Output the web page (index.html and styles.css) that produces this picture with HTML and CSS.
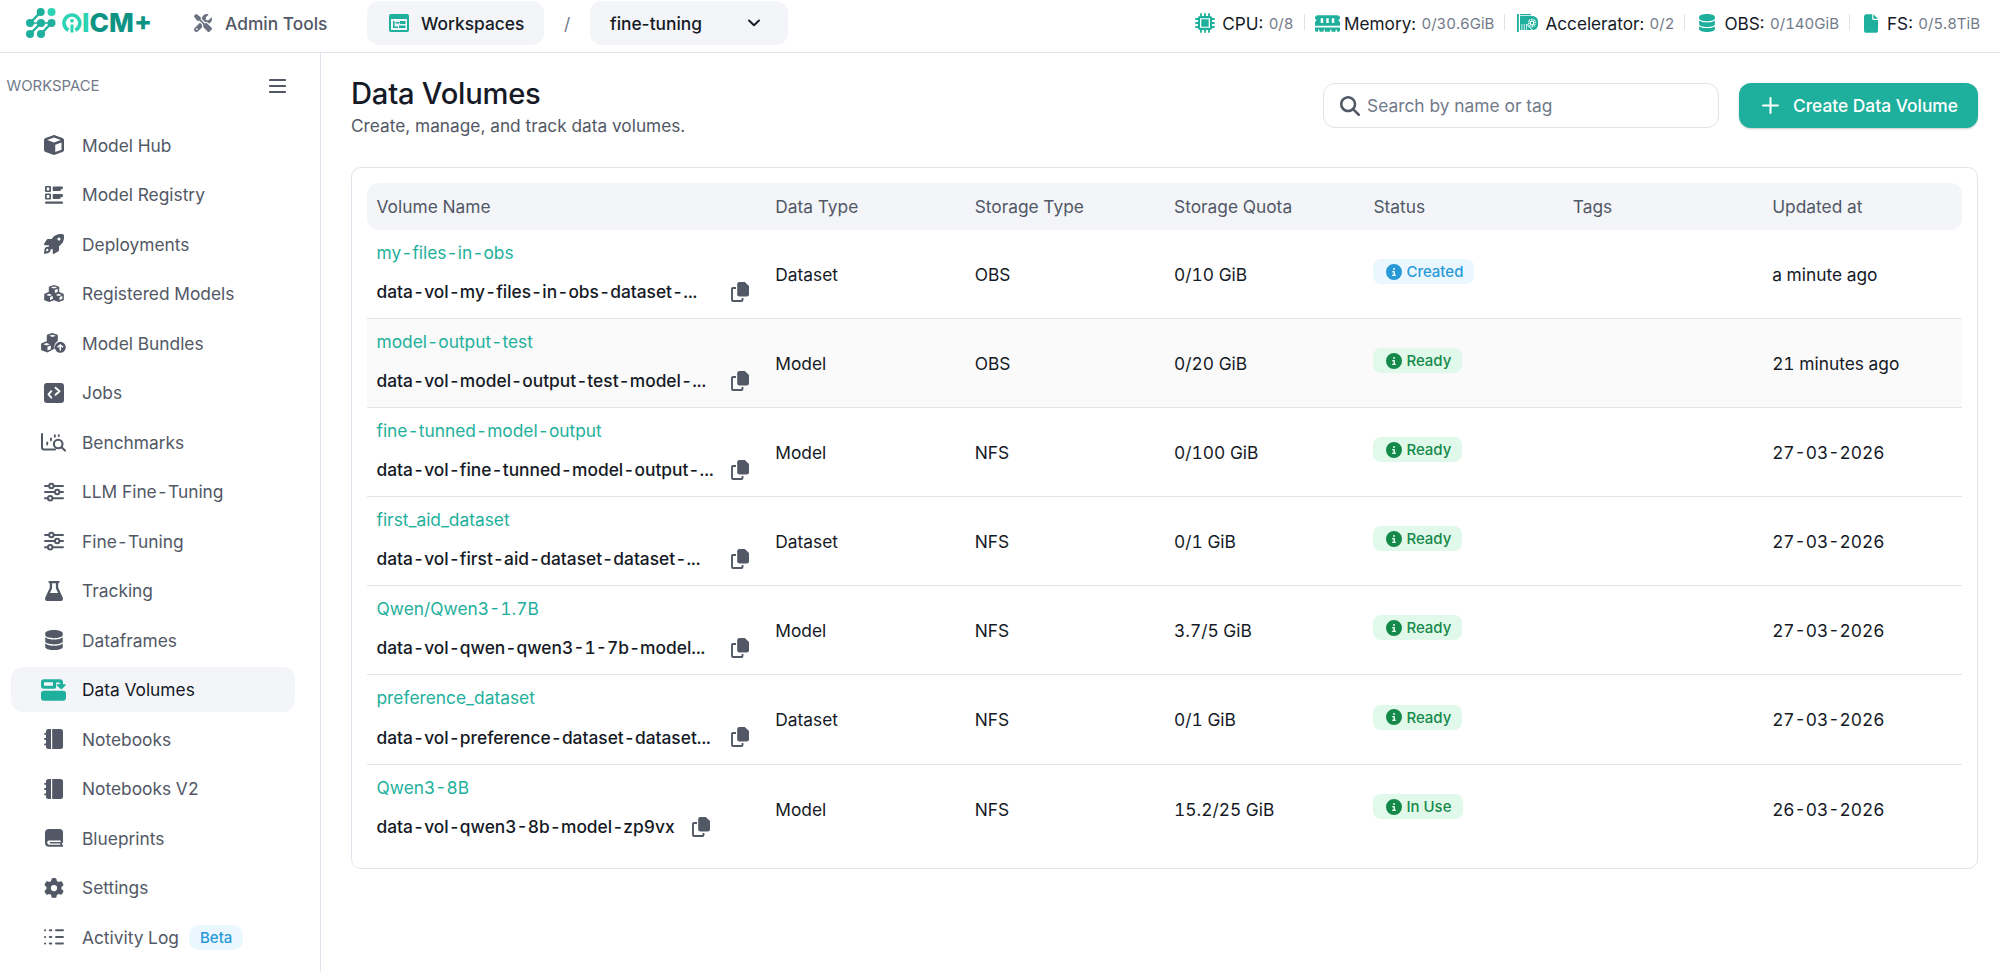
FILE: index.html
```
<!DOCTYPE html>
<html lang="en">
<head>
    <meta charset="UTF-8">
    <meta name="viewport" content="width=device-width, initial-scale=1.0">
    <title>QICM+ - Data Volumes</title>
    <link rel="stylesheet" href="styles.css">
</head>
<body>
    <!-- Icon set -->
    <svg class="sprite" xmlns="http://www.w3.org/2000/svg">
        <symbol id="tools" viewBox="0 0 512 512"><path d="M78.6 5C69.1-2.4 55.6-1.5 47 7L7 47c-8.5 8.5-9.4 22-2.1 31.6l80 104c4.5 5.9 11.6 9.4 19 9.4h54.1l109 109c-14.7 29-10 65.4 14.3 89.6l112 112c12.5 12.5 32.8 12.5 45.3 0l64-64c12.5-12.5 12.5-32.8 0-45.3l-112-112c-24.2-24.2-60.6-29-89.6-14.3l-109-109V104c0-7.5-3.5-14.5-9.4-19L78.6 5zM19.9 396.1C7.2 408.8 0 426.1 0 444.1C0 481.6 30.4 512 67.9 512c18 0 35.3-7.2 48-19.9L233.7 374.3c-7.8-20.9-9-43.6-3.6-65.1l-61.7-61.7L19.9 396.1zM512 144c0-10.5-1.1-20.7-3.2-30.5c-2.4-11.2-16.1-14.1-24.2-6l-63.9 63.9c-3 3-7.1 4.7-11.3 4.7H352c-8.8 0-16-7.2-16-16V102.6c0-4.2 1.7-8.3 4.7-11.3l63.9-63.9c8.1-8.1 5.2-21.8-6-24.2C388.7 1.1 378.5 0 368 0C288.5 0 224 64.5 224 144l0 .8 85.3 85.3c36-9.1 75.8 .5 104 28.7L429 274.5c49-23 83-72.8 83-130.5zM56 432a24 24 0 1 1 48 0 24 24 0 1 1 -48 0z"/></symbol>
        <symbol id="workspaces" viewBox="0 0 20 18"><path fill-rule="evenodd" d="M2 0h16a2 2 0 0 1 2 2v14a2 2 0 0 1-2 2H2a2 2 0 0 1-2-2V2a2 2 0 0 1 2-2zM2 5v11h16V5z"/><path d="M4 7h1.600v5.500H9V14H4zM6.500 8h4v1.500h-4zM11 7h5.500v3H11zM10 11.500h6.500v2.500H10z"/></symbol>
        <symbol id="chip" viewBox="0 0 20 20"><path fill-rule="evenodd" d="M5 3h10a2 2 0 0 1 2 2v10a2 2 0 0 1-2 2H5a2 2 0 0 1-2-2V5a2 2 0 0 1 2-2zm0 2.200v9.600h10V5.200z"/><path d="M6.300 6.300h7.400v7.400H6.300z"/><path fill="none" stroke="currentColor" stroke-width="1.800" stroke-linecap="round" d="M6 1v3M10 1v3M14 1v3M6 16v3M10 16v3M14 16v3M1 6h3M1 10h3M1 14h3M16 6h3M16 10h3M16 14h3"/></symbol>
        <symbol id="memory" viewBox="0 0 576 380"><path fill-rule="evenodd" d="M64 0C28.700 0 0 28.700 0 64v7c0 6.600 4.700 12.600 10.900 14.800C23.600 90.200 32 102.200 32 116s-8.400 25.800-21.100 30.200C4.700 148.400 0 154.400 0 161v79h576v-79c0-6.600-4.700-12.600-10.900-14.800C552.400 141.800 544 129.800 544 116s8.400-25.800 21.100-30.200c6.200-2.200 10.900-8.200 10.900-14.800v-7c0-35.300-28.700-64-64-64zM132 70h56v110h-56zm128 0h56v110h-56zm128 0h56v110h-56zM0 280v72c0 16 14 28 32 28h38v-36c0-20 32-20 32 0v36h95v-36c0-20 32-20 32 0v36h118v-36c0-20 32-20 32 0v36h95v-36c0-20 32-20 32 0v36h38c18 0 32-12 32-28v-72z"/></symbol>
        <symbol id="accelerator" viewBox="0 0 21 18"><path d="M0 0h1.800v18H0zM3 0h11v1.200H3zM3 2h12.500A5.500 5.500 0 0 1 21 8v2.500c0 3-2 5.500-5 5.500l-6-6H3z"/><path d="M3 9h1.500v7H3zM5.300 9h1.500v7H5.300zM7.600 9h1.500v7H7.600zM9.800 11l5 5h-5z"/><circle cx="15" cy="9" r="4.200" fill="#fff"/><circle cx="15" cy="9" r="3.100" fill="none" stroke="currentColor" stroke-width="1.500" stroke-dasharray="1.600 .800"/><circle cx="15" cy="9" r="1.200"/></symbol>
        <symbol id="database" viewBox="0 0 448 512"><path d="M448 80v48c0 44.200-100.300 80-224 80S0 172.200 0 128V80C0 35.800 100.300 0 224 0S448 35.800 448 80zM393.200 214.700c20.800-7.400 39.900-16.900 54.800-28.600V288c0 44.200-100.300 80-224 80S0 332.200 0 288V186.100c14.900 11.800 34 21.200 54.800 28.600C99.700 230.700 159.500 240 224 240s124.300-9.300 169.200-25.300zM0 346.100c14.900 11.800 34 21.200 54.800 28.600C99.700 390.700 159.500 400 224 400s124.300-9.300 169.200-25.300c20.800-7.400 39.900-16.900 54.800-28.600V432c0 44.200-100.300 80-224 80S0 476.200 0 432V346.100z"/></symbol>
        <symbol id="file" viewBox="0 0 384 512"><path d="M0 64C0 28.700 28.700 0 64 0h160v128c0 17.700 14.300 32 32 32h128v288c0 35.300-28.700 64-64 64H64c-35.300 0-64-28.700-64-64zm384 64H256V0z"/></symbol>
        <symbol id="cube" viewBox="0 0 512 512"><path d="M234.500 5.700c13.900-5 29.100-5 43.100 0l192 68.600C495 83.400 512 107.500 512 134.600l0 242.900c0 27-17 51.200-42.500 60.300l-192 68.600c-13.900 5-29.100 5-43.100 0l-192-68.600C17 428.600 0 404.500 0 377.400L0 134.600c0-27 17-51.200 42.500-60.300l192-68.600zM256 66L82.300 128 256 190l173.700-62L256 66zm32 368.600l160-57.100 0-188L288 246.600l0 188z"/></symbol>
        <symbol id="registry" viewBox="0 0 18 18"><path fill-rule="evenodd" d="M1 0h4a1 1 0 0 1 1 1v4a1 1 0 0 1-1 1H1a1 1 0 0 1-1-1V1a1 1 0 0 1 1-1zm.700 1.600v2.800h2.600V1.600zM1 7.500h4a1 1 0 0 1 1 1v4a1 1 0 0 1-1 1H1a1 1 0 0 1-1-1v-4a1 1 0 0 1 1-1zm.700 1.600v2.800h2.600V9.100z"/><path d="M8.500.5H17a.8.8 0 0 1 .8.800V2.500a.8.8 0 0 1-.8.800h-1.200v.9a.8.800 0 0 1-.8.800H8.500a.8.800 0 0 1-.8-.8V1.300a.8.800 0 0 1 .8-.8zM8.500 8H17a.8.8 0 0 1 .8.800v1.700a.8.800 0 0 1-.8.800h-1.600v.9a.8.800 0 0 1-.8.800H8.500a.8.800 0 0 1-.8-.8V8.800a.8.800 0 0 1 .8-.8z"/><rect y="15.500" width="18" height="2.300" rx="1"/></symbol>
        <symbol id="rocket" viewBox="0 0 512 512"><path d="M156.600 384.900L125.700 354c-8.500-8.500-11.500-20.800-7.700-32.200c3-8.900 7-20.500 11.800-33.800L24 288c-8.600 0-16.600-4.600-20.900-12.100s-4.200-16.700 .2-24.100l52.500-88.500c13-21.900 36.500-35.300 61.900-35.300l82.300 0c2.400-4 4.800-7.700 7.200-11.300C289.100-4.100 411.100-8.100 483.900 5.300c11.600 2.100 20.600 11.200 22.800 22.800c13.400 72.900 9.300 194.800-111.400 276.700c-3.500 2.400-7.300 4.800-11.300 7.200v82.300c0 25.400-13.400 49-35.300 61.900l-88.500 52.500c-7.400 4.400-16.600 4.500-24.100 .2s-12.100-12.200-12.100-20.900V380.800c-14.100 4.900-26.400 8.900-35.700 11.900c-11.200 3.600-23.400 .5-31.800-7.800zM384 168a40 40 0 1 0 0-80 40 40 0 1 0 0 80z"/><path fill-rule="evenodd" d="M36 346c30-30 85-30 113 0s28 85 0 114c-40 36-145 50-145 50s-4-128 32-164zm70 42c-10-10-27-10-38 0-12 12-16 55-16 55s43-6 54-17c11-10 11-27 0-38z"/></symbol>
        <symbol id="cubes" viewBox="0 0 20 18"><path fill-rule="evenodd" d="M10 0l4.500 1.500q.7.200.7 1v4.600l3.800 1.400q.8.300.8 1.100v4.800q0 .8-.8 1.100l-4.300 1.600L10 15.300l-4.700 1.800L1 15.500q-.8-.3-.8-1.100V9.600q0-.8.800-1.100l3.800-1.400V2.500q0-.8.700-1zm0 1.400L6.800 2.500 10 3.600l3.200-1.100zm.8 6.700 2.900-1.100V3.800l-2.900 1zM5.200 8.800 2.200 9.900l3 1 3-1zm.8 6.300 2.800-1v-3L6 12.100zm8.700-6.300-3 1.100 3 1 3-1zm.8 6.300 2.800-1v-3l-2.800 1z"/></symbol>
        <symbol id="bundles" viewBox="0 0 25 20"><path fill-rule="evenodd" d="M11.500 0 16 1.500q.8.300.8 1.100v5.100l-2.500 2.500q-1.500 2.200-.6 5.500l-1.800.8L6.500 19.500 1 17.400q-.9-.3-.9-1.200v-5q0-.9.9-1.200l4.800-1.700V2.600q0-.8.8-1.100zm0 1.700L8.200 2.800l3.300 1.200 3.300-1.200zM5.600 10 2.300 11.200l3.300 1.200 3.300-1.200zm.9 7.400 3.300-1.200v-3.600l-3.300 1.200z"/><path fill-rule="evenodd" d="M19.300 8.800a5.500 5.500 0 1 1 0 11 5.500 5.500 0 0 1 0-11zm-.8 8.700h1.600v-4l1.500 1.300 1-1.100-3.300-2.800-3.300 2.800 1 1.100 1.500-1.300z"/></symbol>
        <symbol id="code" viewBox="0 0 20 20"><path d="M3 0h14a3 3 0 0 1 3 3v14a3 3 0 0 1-3 3H3a3 3 0 0 1-3-3V3a3 3 0 0 1 3-3z"/><path fill="none" stroke="#fff" stroke-width="1.900" stroke-linecap="round" stroke-linejoin="round" d="M7.300 8.200 4.500 11.400l2.800 3.200M11.500 4.800l4 3.500-4 3.500"/></symbol>
        <symbol id="benchmark" viewBox="0 0 25 19"><path fill="none" stroke="currentColor" stroke-width="2" stroke-linecap="round" stroke-linejoin="round" d="M1 1v13.500q0 2 2 2h11"/><path fill="none" stroke="currentColor" stroke-width="1.900" stroke-linecap="round" d="M6.200 9.500v2M10 5.500v1.800M13.800 2.300v1.400M17.800 2.200v.8"/><circle cx="17.200" cy="11" r="4.300" fill="none" stroke="currentColor" stroke-width="2.100"/><path stroke="currentColor" stroke-width="2.100" stroke-linecap="round" d="M20.500 14.300l3.500 3.300"/></symbol>
        <symbol id="sliders" viewBox="0 0 20 20"><g fill="none" stroke="currentColor" stroke-width="2" stroke-linecap="round"><path d="M1 4h3.800M10 4h9M1 10h9.500M15.800 10H19M1 16.200h2.600M8.800 16.200H19"/><circle cx="7.400" cy="4" r="2.200"/><circle cx="13.200" cy="10" r="2.200"/><circle cx="6.200" cy="16.200" r="2.200"/></g></symbol>
        <symbol id="flask" viewBox="0 0 18 20"><path fill-rule="evenodd" d="M4.500 0h9a1 1 0 0 1 0 2.200h-.3v4.600l4.500 9.700c.8 1.800-.3 3.500-2.200 3.500h-13C.6 20-.5 18.300.3 16.500l4.500-9.700V2.200h-.3a1 1 0 0 1 0-2.200zm2.600 2.200v5.100L5 12h8l-2.100-4.700V2.200z"/></symbol>
        <symbol id="volumes" viewBox="0 0 25 22"><path fill-rule="evenodd" d="M3 .2h15.500q3.500 0 3.500 3.300v1.700h2.200q1 .3.300 1.200l-3.600 3.700q-.7.500-1.300 0L16 6.400q-.6-1 .4-1.200h2.400V4.500q0-1-1-1h-2.600v4.200q0 2-2 2H3q-3 0-3-2.500V2.700Q0 .2 3 .2zm0 3v3.500h9V3.200zM3 11.800h19q3 0 3 2.700v4.300q0 3-3 3H3q-3 0-3-3v-4.300q0-2.700 3-2.700z"/></symbol>
        <symbol id="notebook" viewBox="0 0 19 20"><path d="M4.500 0H7v20H4.500Q2 20 2 17.500v-1.200H1a.9.900 0 0 1 0-1.800h1v-3.600H1a.9.900 0 0 1 0-1.800h1V5.700H1A.9.900 0 0 1 1 3.900h1V2.500Q2 0 4.500 0zM8.200 0h8.300Q19 0 19 2.500v15q0 2.500-2.500 2.500H8.200z"/></symbol>
        <symbol id="book" viewBox="0 0 18 18"><path fill-rule="evenodd" d="M4 0h10.500Q18 0 18 3.500v9q0 1.500-.9 2v1.300h.2a.9.900 0 0 1 0 1.900H4q-4 0-4-4V4Q0 0 4 0zm0 11.500q-1.800 0-1.800 2.100t1.800 2.100h11.300v-1.500H5a.5.500 0 0 1 0-.9h10.600V11.500z"/><path d="M5 13.200h10.600v1.100H5z"/></symbol>
        <symbol id="gear" viewBox="0 0 512 512"><path d="M495.900 166.600c3.200 8.700 .5 18.400-6.400 24.600l-43.300 39.400c1.100 8.300 1.700 16.800 1.700 25.400s-.6 17.100-1.700 25.400l43.300 39.400c6.900 6.200 9.600 15.900 6.400 24.600c-4.400 11.900-9.700 23.300-15.800 34.300l-4.700 8.100c-6.600 11-14 21.400-22.100 31.200c-5.900 7.200-15.700 9.600-24.500 6.800l-55.700-17.700c-13.400 10.300-28.200 18.900-44 25.400l-12.500 57.100c-2 9.100-9 16.300-18.200 17.800c-13.800 2.300-28 3.500-42.500 3.500s-28.700-1.200-42.500-3.500c-9.200-1.500-16.200-8.700-18.200-17.800l-12.500-57.100c-15.800-6.500-30.600-15.100-44-25.400L83.100 425.900c-8.800 2.800-18.600 .3-24.500-6.800c-8.100-9.800-15.500-20.200-22.100-31.200l-4.700-8.100c-6.100-11-11.400-22.400-15.800-34.300c-3.200-8.700-.5-18.400 6.400-24.600l43.300-39.400C64.600 273.100 64 264.600 64 256s.6-17.100 1.700-25.400L22.400 191.200c-6.900-6.200-9.600-15.900-6.400-24.600c4.400-11.900 9.700-23.300 15.800-34.300l4.700-8.100c6.600-11 14-21.400 22.100-31.200c5.900-7.200 15.700-9.600 24.500-6.800l55.700 17.700c13.400-10.300 28.200-18.900 44-25.400l12.500-57.100c2-9.100 9-16.300 18.200-17.800C227.300 1.200 241.500 0 256 0s28.700 1.200 42.500 3.500c9.200 1.500 16.200 8.700 18.200 17.800l12.500 57.100c15.800 6.500 30.600 15.100 44 25.400l55.700-17.700c8.800-2.800 18.600-.3 24.500 6.800c8.100 9.800 15.500 20.200 22.100 31.200l4.700 8.100c6.100 11 11.400 22.400 15.800 34.300zM256 336a80 80 0 1 0 0-160 80 80 0 1 0 0 160z"/></symbol>
        <symbol id="list" viewBox="0 0 20 16"><path fill="none" stroke="currentColor" stroke-width="1.900" stroke-linecap="round" d="M1 1.200h.2M5.800 1.200h1.500M12 1.200h7M1 8h.2M5.800 8h1.500M12 8h7M1 14.500h.2M5.800 14.500h1.500M12 14.500h7"/></symbol>
        <symbol id="search" viewBox="0 0 512 512"><path d="M416 208c0 45.900-14.900 88.300-40 122.700L502.600 457.400c12.500 12.500 12.500 32.800 0 45.300s-32.800 12.500-45.300 0L330.700 376c-34.400 25.200-76.800 40-122.700 40C93.100 416 0 322.900 0 208S93.100 0 208 0S416 93.100 416 208zM208 352a144 144 0 1 0 0-288 144 144 0 1 0 0 288z"/></symbol>
        <symbol id="copy" viewBox="0 0 18 20"><path d="M8.500 0h5.300L18 4v8.200q0 2.300-2.300 2.300H8.500q-2.300 0-2.300-2.300V2.300Q6.200 0 8.500 0z"/><path fill="none" stroke="currentColor" stroke-width="1.900" stroke-linejoin="round" d="M5 6H2q-1 0-1 1v11q0 1 1 1h8.500q1 0 1-1v-2"/></symbol>
        <symbol id="info" viewBox="0 0 512 512"><path d="M256 512A256 256 0 1 0 256 0a256 256 0 1 0 0 512zM216 336h24V272H216c-13.300 0-24-10.700-24-24s10.700-24 24-24h48c13.300 0 24 10.700 24 24v88h8c13.300 0 24 10.700 24 24s-10.700 24-24 24H216c-13.300 0-24-10.700-24-24s10.700-24 24-24zm40-208a32 32 0 1 1 0 64 32 32 0 1 1 0-64z"/></symbol>
    </svg>

    <header class="topbar">
        <svg class="logo" viewBox="0 0 128 32" width="128" height="32">
            <g stroke="#1eb09c" fill="#1eb09c">
                <path d="M15.700 5L5 16M16 16L5 27M26.500 16L16 27" fill="none" stroke-width="2.400"/>
                <path d="M5 16L16 16M16 16L26.500 16" fill="none" stroke-width="1.500"/>
                <g stroke="none">
                    <circle cx="15.700" cy="5" r="4"/><circle cx="5" cy="16" r="4"/><circle cx="16" cy="16" r="4"/>
                    <circle cx="26.500" cy="16" r="4"/><circle cx="5" cy="27" r="4"/><circle cx="16" cy="27" r="4"/>
                </g>
            </g>
            <circle cx="26.500" cy="5" r="4" fill="#2dd4b4"/>
            <path d="M43.500 23.100A7.900 7.900 0 1 1 50.300 23.100" fill="none" stroke="#2dd4b4" stroke-width="3.600"/>
            <path d="M47 17.500v8" stroke="#2dd4b4" stroke-width="3"/>
            <circle cx="47" cy="13.800" r="1.900" fill="#2dd4b4"/>
            <text class="logo-text" x="57" y="25.200" textLength="70" lengthAdjust="spacingAndGlyphs"><tspan fill="#2dd4b4">I</tspan>CM+</text>
        </svg>
        <a class="admin" href="#"><svg width="18" height="18"><use href="#tools"/></svg>Admin Tools</a>
        <a class="pill workspaces" href="#"><svg width="20" height="18"><use href="#workspaces"/></svg>Workspaces</a>
        <span class="slash">/</span>
        <button class="pill project">fine-tuning
            <svg width="12" height="8" viewBox="0 0 12 8"><path d="M1 1.500l5 4.800 5-4.800" fill="none" stroke="#151a26" stroke-width="1.900" stroke-linecap="round" stroke-linejoin="round"/></svg>
        </button>
        <div class="usage">
            <div class="stat cpu"><svg width="20" height="20"><use href="#chip"/></svg><b>CPU:</b><span>0/8</span></div>
            <div class="stat mem"><svg width="25" height="17"><use href="#memory"/></svg><b>Memory:</b><span>0/30.6GiB</span></div>
            <div class="stat acc"><svg width="21" height="18"><use href="#accelerator"/></svg><b>Accelerator:</b><span>0/2</span></div>
            <div class="stat obs"><svg width="16" height="18"><use href="#database"/></svg><b>OBS:</b><span>0/140GiB</span></div>
            <div class="stat fs"><svg width="14" height="19"><use href="#file"/></svg><b>FS:</b><span>0/5.8TiB</span></div>
        </div>
    </header>

    <div class="layout">
        <aside class="sidebar">
            <div class="sidebar-head">
                <span>WORKSPACE</span>
                <svg width="17" height="16" viewBox="0 0 17 16"><path d="M1 2h15M1 8h15M1 14h15" stroke="#525866" stroke-width="2.200" stroke-linecap="round"/></svg>
            </div>
            <nav>
                <a href="#"><i><svg width="20" height="20"><use href="#cube"/></svg></i>Model Hub</a>
                <a href="#"><i><svg width="18" height="18"><use href="#registry"/></svg></i>Model Registry</a>
                <a href="#"><i><svg width="20" height="20"><use href="#rocket"/></svg></i>Deployments</a>
                <a href="#"><i><svg width="20" height="18"><use href="#cubes"/></svg></i>Registered Models</a>
                <a href="#"><i><svg width="25" height="20"><use href="#bundles"/></svg></i>Model Bundles</a>
                <a href="#"><i><svg width="20" height="20"><use href="#code"/></svg></i>Jobs</a>
                <a href="#"><i><svg width="25" height="19"><use href="#benchmark"/></svg></i>Benchmarks</a>
                <a href="#"><i><svg width="20" height="20"><use href="#sliders"/></svg></i>LLM Fine-Tuning</a>
                <a href="#"><i><svg width="20" height="20"><use href="#sliders"/></svg></i>Fine-Tuning</a>
                <a href="#"><i><svg width="18" height="20"><use href="#flask"/></svg></i>Tracking</a>
                <a href="#"><i><svg width="18" height="20"><use href="#database"/></svg></i>Dataframes</a>
                <a href="#" class="active"><i><svg width="25" height="22"><use href="#volumes"/></svg></i>Data Volumes</a>
                <a href="#"><i><svg width="19" height="20"><use href="#notebook"/></svg></i>Notebooks</a>
                <a href="#"><i><svg width="19" height="20"><use href="#notebook"/></svg></i>Notebooks V2</a>
                <a href="#"><i><svg width="18" height="18"><use href="#book"/></svg></i>Blueprints</a>
                <a href="#"><i><svg width="20" height="20"><use href="#gear"/></svg></i>Settings</a>
                <a href="#"><i><svg width="20" height="16"><use href="#list"/></svg></i>Activity Log <span class="beta">Beta</span></a>
            </nav>
        </aside>

        <main>
            <div class="page-head">
                <div>
                    <h1>Data Volumes</h1>
                    <p>Create, manage, and track data volumes.</p>
                </div>
                <div class="actions">
                    <label class="search">
                        <svg width="20" height="20"><use href="#search"/></svg>
                        <input type="text" placeholder="Search by name or tag">
                    </label>
                    <button class="create">
                        <svg width="17" height="17" viewBox="0 0 17 17"><path d="M8.500 1v15M1 8.500h15" stroke="#fff" stroke-width="2" stroke-linecap="round"/></svg>
                        Create Data Volume
                    </button>
                </div>
            </div>

            <div class="card">
                <div class="row head">
                    <div>Volume Name</div><div>Data Type</div><div>Storage Type</div><div>Storage Quota</div><div>Status</div><div>Tags</div><div>Updated at</div>
                </div>
                <div class="row">
                    <div class="name"><a href="#">my-files-in-obs</a><p><span>data-vol-my-files-in-obs-dataset-...</span><svg width="18" height="20"><use href="#copy"/></svg></p></div>
                    <div>Dataset</div><div>OBS</div><div>0/10 GiB</div>
                    <div><span class="badge created"><svg width="16" height="16"><use href="#info"/></svg>Created</span></div>
                    <div></div><div>a minute ago</div>
                </div>
                <div class="row hover">
                    <div class="name"><a href="#">model-output-test</a><p><span>data-vol-model-output-test-model-...</span><svg width="18" height="20"><use href="#copy"/></svg></p></div>
                    <div>Model</div><div>OBS</div><div>0/20 GiB</div>
                    <div><span class="badge"><svg width="16" height="16"><use href="#info"/></svg>Ready</span></div>
                    <div></div><div>21 minutes ago</div>
                </div>
                <div class="row">
                    <div class="name"><a href="#">fine-tunned-model-output</a><p><span>data-vol-fine-tunned-model-output-...</span><svg width="18" height="20"><use href="#copy"/></svg></p></div>
                    <div>Model</div><div>NFS</div><div>0/100 GiB</div>
                    <div><span class="badge"><svg width="16" height="16"><use href="#info"/></svg>Ready</span></div>
                    <div></div><div>27-03-2026</div>
                </div>
                <div class="row">
                    <div class="name"><a href="#">first_aid_dataset</a><p><span>data-vol-first-aid-dataset-dataset-...</span><svg width="18" height="20"><use href="#copy"/></svg></p></div>
                    <div>Dataset</div><div>NFS</div><div>0/1 GiB</div>
                    <div><span class="badge"><svg width="16" height="16"><use href="#info"/></svg>Ready</span></div>
                    <div></div><div>27-03-2026</div>
                </div>
                <div class="row">
                    <div class="name"><a href="#">Qwen/Qwen3-1.7B</a><p><span>data-vol-qwen-qwen3-1-7b-model...</span><svg width="18" height="20"><use href="#copy"/></svg></p></div>
                    <div>Model</div><div>NFS</div><div>3.7/5 GiB</div>
                    <div><span class="badge"><svg width="16" height="16"><use href="#info"/></svg>Ready</span></div>
                    <div></div><div>27-03-2026</div>
                </div>
                <div class="row">
                    <div class="name"><a href="#">preference_dataset</a><p><span>data-vol-preference-dataset-dataset...</span><svg width="18" height="20"><use href="#copy"/></svg></p></div>
                    <div>Dataset</div><div>NFS</div><div>0/1 GiB</div>
                    <div><span class="badge"><svg width="16" height="16"><use href="#info"/></svg>Ready</span></div>
                    <div></div><div>27-03-2026</div>
                </div>
                <div class="row">
                    <div class="name"><a href="#">Qwen3-8B</a><p class="short"><span>data-vol-qwen3-8b-model-zp9vx</span><svg width="18" height="20"><use href="#copy"/></svg></p></div>
                    <div>Model</div><div>NFS</div><div>15.2/25 GiB</div>
                    <div><span class="badge"><svg width="16" height="16"><use href="#info"/></svg>In Use</span></div>
                    <div></div><div>26-03-2026</div>
                </div>
            </div>
        </main>
    </div>
</body>
</html>
```
FILE: styles.css
```
* {
    box-sizing: border-box;
}

body {
    margin: 0;
    height: 972px;
    overflow: hidden;
    background-color: #fff;
    color: #151a26;
    font-family: Inter, "Liberation Sans", sans-serif;
    font-size: 17.35px;
}

a {
    color: inherit;
    text-decoration: none;
}

button,
input {
    font: inherit;
    border: none;
    color: inherit;
}

svg {
    fill: currentColor;
    flex-shrink: 0;
}

.sprite {
    display: none;
}

/* Inter also widens the dash with tabular figures */
.usage,
nav,
.card {
    font-variant-numeric: tabular-nums;
}

/* Top bar */
.topbar {
    display: flex;
    align-items: flex-start;
    height: 53px;
    border-bottom: 1px solid #e2e3ec;
    padding-left: 25px;
}

.topbar > a,
.topbar > button,
.slash {
    display: flex;
    align-items: center;
    height: 44px;
    margin-top: 1px;
}

.logo {
    margin-top: 7px;
}

.logo-text {
    font-weight: 800;
    font-size: 25.5px;
    fill: #0d9384;
}

.admin {
    width: 173px;
    margin-left: 41px;
    color: #525866;
    font-weight: 500;
}

.admin svg {
    margin-right: 13px;
    color: #6b7181;
}

.pill {
    background-color: #f3f5f9;
    border-radius: 12px;
    font-weight: 500;
}

.workspaces {
    width: 177px;
    padding-left: 22px;
}

.workspaces svg {
    margin-right: 12px;
    color: #1eb09c;
}

.slash {
    width: 46px;
    justify-content: center;
    color: #727a8a;
}

.project {
    width: 198px;
    justify-content: space-between;
    padding: 0 28px 0 20px;
}

.usage {
    display: flex;
    align-items: center;
    height: 46px;
    margin-left: auto;
    padding-right: 20px;
}

.stat {
    display: flex;
    align-items: center;
}

.stat + .stat::before {
    content: "";
    width: 1px;
    height: 16px;
    margin: 0 10px 2px 10px;
    background-color: #dfe1e8;
}

.stat svg {
    color: #1eb09c;
    margin-right: 7px;
}

.stat.mem svg {
    margin-right: 4.5px;
}

.stat.acc svg {
    margin-left: 2px;
}

.stat.obs svg,
.stat.fs svg {
    margin-left: 4px;
    margin-right: 9px;
}

.stat b {
    font-size: 17.2px;
    font-weight: 400;
    margin-right: 5.5px;
}

.stat span {
    color: #727a8a;
    font-size: 15px;
}

/* Sidebar */
.layout {
    display: flex;
    height: 919px;
}

.sidebar {
    width: 321px;
    border-right: 1px solid #e2e3ec;
    color: #525866;
}

.sidebar-head {
    display: flex;
    justify-content: space-between;
    align-items: center;
    height: 20px;
    margin: 23px 34px 26.8px 6.5px;
    font-size: 14.9px;
    color: #727a8a;
}

nav {
    display: flex;
    flex-direction: column;
    gap: 4.5px;
    padding: 0 25px 0 11px;
}

nav a {
    display: flex;
    align-items: center;
    height: 45px;
    border-radius: 12px;
    padding-left: 29px;
}

nav i {
    display: flex;
    justify-content: center;
    width: 27px;
    margin-right: 15px;
}

nav .active {
    background-color: #f3f5f9;
    color: #151a26;
}

nav .active i {
    color: #1eb09c;
}

.beta {
    margin-left: 10px;
    padding: 3px 11px;
    border-radius: 10px;
    background-color: #eaf7ff;
    color: #2699d6;
    font-size: 15px;
    font-weight: 500;
    line-height: 19px;
}

/* Content */
main {
    flex: 1;
    padding: 0 22px 0 30px;
}

.page-head {
    display: flex;
    justify-content: space-between;
    height: 114px;
}

h1 {
    margin: 22px 0 0;
    font-size: 29.2px;
    font-weight: 500;
    line-height: 38px;
    letter-spacing: -0.25px;
}

.page-head p {
    margin: 2px 0 0;
    font-size: 17.25px;
    color: #525866;
    line-height: 22px;
}

.actions {
    display: flex;
    gap: 20px;
    margin-top: 30px;
}

.search {
    display: flex;
    align-items: center;
    gap: 7px;
    width: 396px;
    height: 45px;
    border: 1px solid #e2e3ec;
    border-radius: 12px;
    padding-left: 16px;
    color: #525866;
}

.search input {
    flex: 1;
    padding: 0;
    outline: none;
    background: none;
}

.search input::placeholder {
    color: #727a8a;
}

.create {
    display: flex;
    align-items: center;
    gap: 14px;
    width: 239px;
    height: 45px;
    padding: 0 0 0 23px;
    border-radius: 12px;
    background-color: #1eb09c;
    box-shadow: 0 1px 2px rgba(30, 60, 60, 0.25);
    color: #fff;
    font-weight: 500;
    white-space: nowrap;
}

/* Table */
.card {
    height: 702px;
    border: 1px solid #e2e3ec;
    border-radius: 10px;
    padding: 15px;
}

.row {
    display: grid;
    grid-template-columns: 2fr repeat(6, 1fr);
    align-items: center;
    height: 89.1px;
    border-bottom: 1px solid #e2e3ec;
}

.row:last-child {
    border-bottom: none;
}

.row > div {
    min-width: 0;
    padding-left: 9.5px;
}

.row.head {
    height: 47px;
    border: none;
    border-radius: 12px;
    background-color: #f3f5f9;
    color: #525866;
}

.row.hover {
    background-color: #fafafb;
}

.name {
    margin-bottom: 4px;
}

.name a {
    display: block;
    color: #1eb09c;
    line-height: 22px;
}

.name p {
    display: flex;
    align-items: center;
    height: 22px;
    margin: 17px 0 0;
    font-weight: 500;
    white-space: nowrap;
}

.name span {
    min-width: 337px;
    margin-right: 17px;
}

.name .short span {
    min-width: 0;
}

.name svg {
    color: #525866;
}

.badge {
    display: inline-flex;
    align-items: center;
    gap: 4.5px;
    height: 25px;
    margin-bottom: 5px;
    padding: 0 11px 0 12.5px;
    border-radius: 8px;
    background-color: #e1f9ea;
    color: #15894a;
    font-size: 15px;
    font-weight: 500;
}

.badge.created {
    background-color: #eaf7ff;
    color: #2699d6;
}
```
